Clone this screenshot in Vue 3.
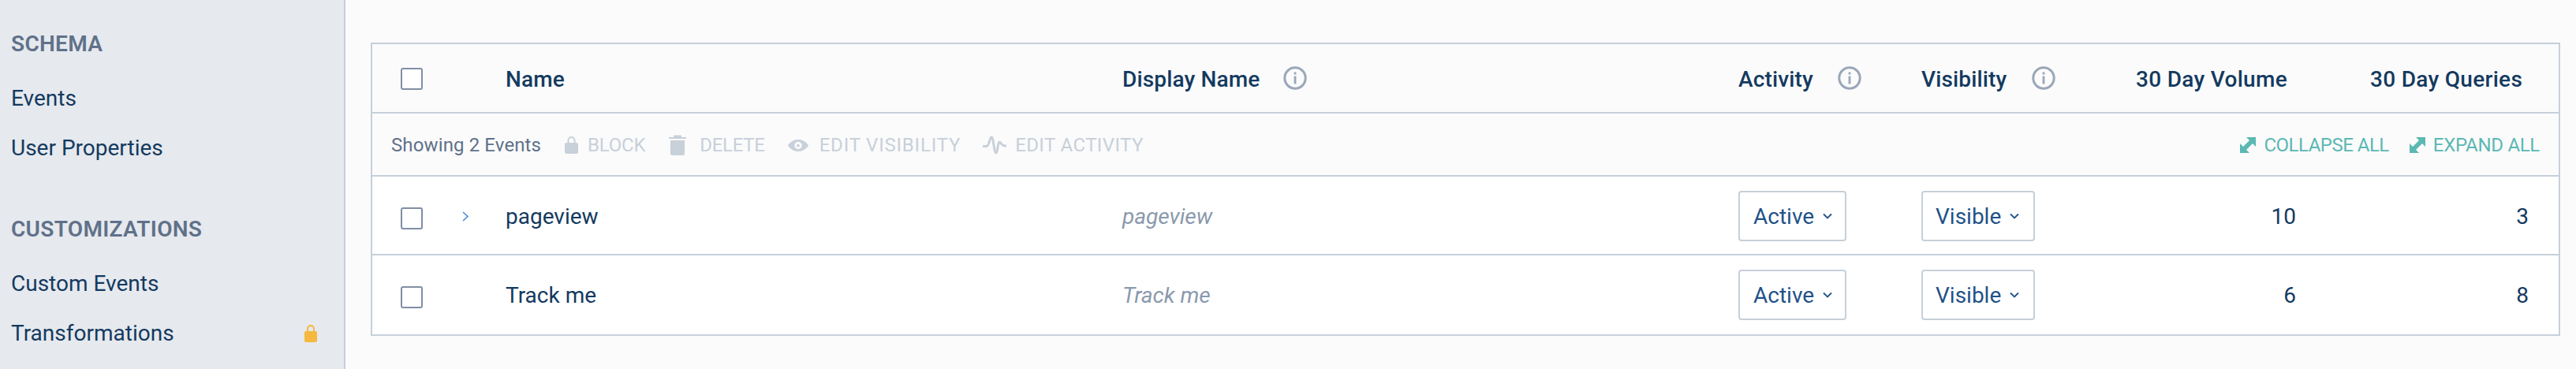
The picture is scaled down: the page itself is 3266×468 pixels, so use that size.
<script setup>
const rows = [
  { name: 'pageview', expandable: true, activity: 'Active', visibility: 'Visible', volume: 10, queries: 3 },
  { name: 'Track me', expandable: false, activity: 'Active', visibility: 'Visible', volume: 6, queries: 8 },
]
</script>

<template>
  <div class="page">
    <aside class="sidebar">
      <h3 class="section">SCHEMA</h3>
      <a class="link">Events</a>
      <a class="link">User Properties</a>
      <h3 class="section second">CUSTOMIZATIONS</h3>
      <a class="link">Custom Events</a>
      <a class="link locked">
        <span>Transformations</span>
        <svg class="lock-gold" viewBox="0 0 16 22"><path d="M4 10V5a4 4 0 0 1 8 0v5" fill="none" stroke="#f5b93f" stroke-width="2"/><rect y="8" width="16" height="14" rx="2" fill="#f5b93f"/></svg>
      </a>
    </aside>
    <main class="main">
      <div class="table">
        <div class="grid head">
          <div class="first"><span class="box"></span></div>
          <div>Name</div>
          <div class="with-info display-head">Display Name
            <svg class="info" viewBox="0 0 30 30"><circle cx="15" cy="15" r="13.2" fill="none" stroke="#9aa7b8" stroke-width="3"/><rect x="13.6" y="7.5" width="2.8" height="3" fill="#9aa7b8"/><rect x="13.6" y="12.5" width="2.8" height="10" fill="#9aa7b8"/></svg>
          </div>
          <div class="with-info activity-head">Activity
            <svg class="info" viewBox="0 0 30 30"><circle cx="15" cy="15" r="13.2" fill="none" stroke="#9aa7b8" stroke-width="3"/><rect x="13.6" y="7.5" width="2.8" height="3" fill="#9aa7b8"/><rect x="13.6" y="12.5" width="2.8" height="10" fill="#9aa7b8"/></svg>
          </div>
          <div class="with-info visibility-head">Visibility
            <svg class="info" viewBox="0 0 30 30"><circle cx="15" cy="15" r="13.2" fill="none" stroke="#9aa7b8" stroke-width="3"/><rect x="13.6" y="7.5" width="2.8" height="3" fill="#9aa7b8"/><rect x="13.6" y="12.5" width="2.8" height="10" fill="#9aa7b8"/></svg>
          </div>
          <div class="wide">30 Day Volume</div>
          <div class="wide">30 Day Queries</div>
        </div>
        <div class="toolbar">
          <span class="count">Showing 2 Events</span>
          <span class="action a-block">
            <svg class="i-lock" viewBox="0 0 17 22"><path d="M4.500 10V5a4 4 0 0 1 8 0v5" fill="none" stroke="#c8d0d9" stroke-width="2"/><rect y="8" width="17" height="14" rx="2" fill="#c8d0d9"/></svg>BLOCK
          </span>
          <span class="action a-delete">
            <svg class="i-trash" viewBox="0 0 22 26"><path d="M7 .5h8a1 1 0 0 1 1 1V3H6V1.500a1 1 0 0 1 1-1zM0 3h22v2H0z" fill="#c8d0d9"/><path d="M2 7h18v17a2 2 0 0 1-2 2H4a2 2 0 0 1-2-2z" fill="#c8d0d9"/></svg>DELETE
          </span>
          <span class="action a-vis">
            <svg class="i-eye" viewBox="0 0 28 16"><path fill-rule="evenodd" d="M0 8C3.500 2.800 8.500 0 14 0s10.500 2.800 14 8c-3.500 5.200-8.500 8-14 8S3.500 13.200 0 8zm14 5a5 5 0 1 0 0-10 5 5 0 0 0 0 10zm0-3a2 2 0 1 1 0-4 2 2 0 0 1 0 4z" fill="#c8d0d9"/></svg>EDIT VISIBILITY
          </span>
          <span class="action a-act">
            <svg class="i-wave" viewBox="0 0 30 24"><path d="M1 13.500h4C8 13 9 2 11 2c3 0 3 20 6 20 2 0 2-14 4-14s2 5 8 5" fill="none" stroke="#c8d0d9" stroke-width="3" stroke-linejoin="round" stroke-linecap="round"/></svg>EDIT ACTIVITY
          </span>
          <span class="spacer"></span>
          <span class="action teal a-collapse">
            <svg class="i-exp" viewBox="0 0 20 20"><path d="M8 0h12v12l-4-4-8 8 4 4H0V8l4 4 8-8z" fill="#5bb8b2"/></svg>COLLAPSE ALL
          </span>
          <span class="action teal a-expand">
            <svg class="i-exp" viewBox="0 0 20 20"><path d="M8 0h12v12l-4-4-8 8 4 4H0V8l4 4 8-8z" fill="#5bb8b2"/></svg>EXPAND ALL
          </span>
        </div>
        <div v-for="(r, i) in rows" :key="r.name" class="grid row" :class="{ 'row-top': i === 0 }">
          <div class="first">
            <span class="box box-row"></span>
            <svg v-if="r.expandable" class="chev" viewBox="0 0 8 13"><path d="M1 1l6 5.500L1 12" fill="none" stroke="#4a8fdc" stroke-width="1.600"/></svg>
          </div>
          <div>{{ r.name }}</div>
          <div class="display">{{ r.name }}</div>
          <div><button class="drop drop-a">{{ r.activity }}<svg class="caret" viewBox="0 0 12 8"><path d="M1 1.500l5 5 5-5" fill="none" stroke="#1f5288" stroke-width="1.800"/></svg></button></div>
          <div><button class="drop drop-v">{{ r.visibility }}<svg class="caret" viewBox="0 0 12 8"><path d="M1 1.500l5 5 5-5" fill="none" stroke="#1f5288" stroke-width="1.800"/></svg></button></div>
          <div class="num vol">{{ r.volume }}</div>
          <div class="num qry">{{ r.queries }}</div>
        </div>
      </div>
    </main>
  </div>
</template>

<style>
html, body { margin: 0; background: #fbfbfc; }
</style>

<style scoped>
.page {
  display: flex;
  width: 3266px;
  height: 468px;
  overflow: hidden;
  font-family: Roboto, "Liberation Sans", sans-serif;
  font-size: 28px;
  color: #143a5f;
  background: #fbfbfc;
}
.sidebar {
  box-sizing: border-box;
  width: 438px;
  flex: none;
  background: #e6e9ee;
  border-right: 2px solid #c6d0da;
  padding: 36px 34px 0 14px;
  display: flex;
  flex-direction: column;
}
.section {
  margin: 0 0 17px;
  font-size: 28px;
  line-height: 40px;
  font-weight: 600;
  letter-spacing: .3px;
  color: #5f7189;
}
.section.second { margin-top: 52px; }
.link {
  display: flex;
  align-items: center;
  justify-content: space-between;
  height: 63px;
  line-height: 40px;
}
.lock-gold { width: 16px; height: 22px; }
.main {
  flex: 1;
  padding: 54px 20px 0 32px;
  min-width: 0;
}
.table {
  border: 2px solid #c6d0da;
  background: #fff;
}
.grid {
  display: grid;
  grid-template-columns: 169px 782px 781px 232px 272px 297px 239px;
  align-items: center;
}
.head {
  height: 84px;
  padding-top: 2px;
  background: #fbfbfc;
  font-weight: 500;
  letter-spacing: .15px;
  border-bottom: 2px solid #c6d0da;
}
.wide { letter-spacing: .3px; }
.first {
  display: flex;
  align-items: center;
  padding-left: 36px;
}
.box {
  box-sizing: border-box;
  width: 28px;
  height: 28px;
  border: 2px solid #7f8fa5;
  border-radius: 3px;
  background: #fff;
}
.box-row { margin-top: 5px; }
.chev { width: 8px; height: 13px; margin-left: 50px; }
.with-info { display: flex; align-items: center; }
.info { width: 30px; height: 30px; margin-top: -2px; }
.display-head .info { margin-left: 30px; }
.activity-head .info { margin-left: 31px; }
.visibility-head .info { margin-left: 32px; }
.toolbar {
  display: flex;
  align-items: center;
  height: 76px;
  padding: 2px 24px 0;
  background: #fbfbfc;
  border-bottom: 2px solid #c6d0da;
  font-size: 24px;
}
.count { color: #5f7189; width: 220px; letter-spacing: .12px; }
.action {
  display: flex;
  align-items: center;
  color: #c8d0d9;
}
.teal { color: #5bb8b2; }
.i-lock { width: 17px; height: 22px; margin-right: 12px; }
.i-trash { width: 22px; height: 26px; margin-right: 17px; }
.i-eye { width: 28px; height: 15px; margin-right: 13px; }
.i-wave { width: 30px; height: 24px; margin-right: 11px; }
.i-exp { width: 20px; height: 20px; margin-right: 10px; }
.a-block { letter-spacing: -.2px; }
.a-delete { margin-left: 30px; letter-spacing: -.3px; }
.a-vis { margin-left: 28px; letter-spacing: .8px; }
.a-act { margin-left: 28px; letter-spacing: .4px; }
.a-collapse { letter-spacing: -.5px; }
.a-expand { margin-left: 26px; letter-spacing: -.3px; }
.spacer { flex: 1; }
.row { height: 100px; }
.row-top {
  box-sizing: border-box;
  border-bottom: 2px solid #c6d0da;
  padding-top: 2px;
}
.display { font-style: italic; color: #8a99ad; }
.drop {
  display: inline-flex;
  align-items: center;
  box-sizing: border-box;
  height: 64px;
  padding: 0;
  background: #fff;
  border: 2px solid #c6d0da;
  border-radius: 4px;
  font: inherit;
  color: #1f5288;
  vertical-align: middle;
}
.drop-a { width: 137px; padding-left: 17px; }
.drop-v { width: 144px; padding-left: 16px; }
.caret { width: 12px; height: 8px; margin-left: 11px; }
.num { text-align: right; }
.vol { padding-right: 94px; }
.qry { padding-right: 38px; }
</style>
